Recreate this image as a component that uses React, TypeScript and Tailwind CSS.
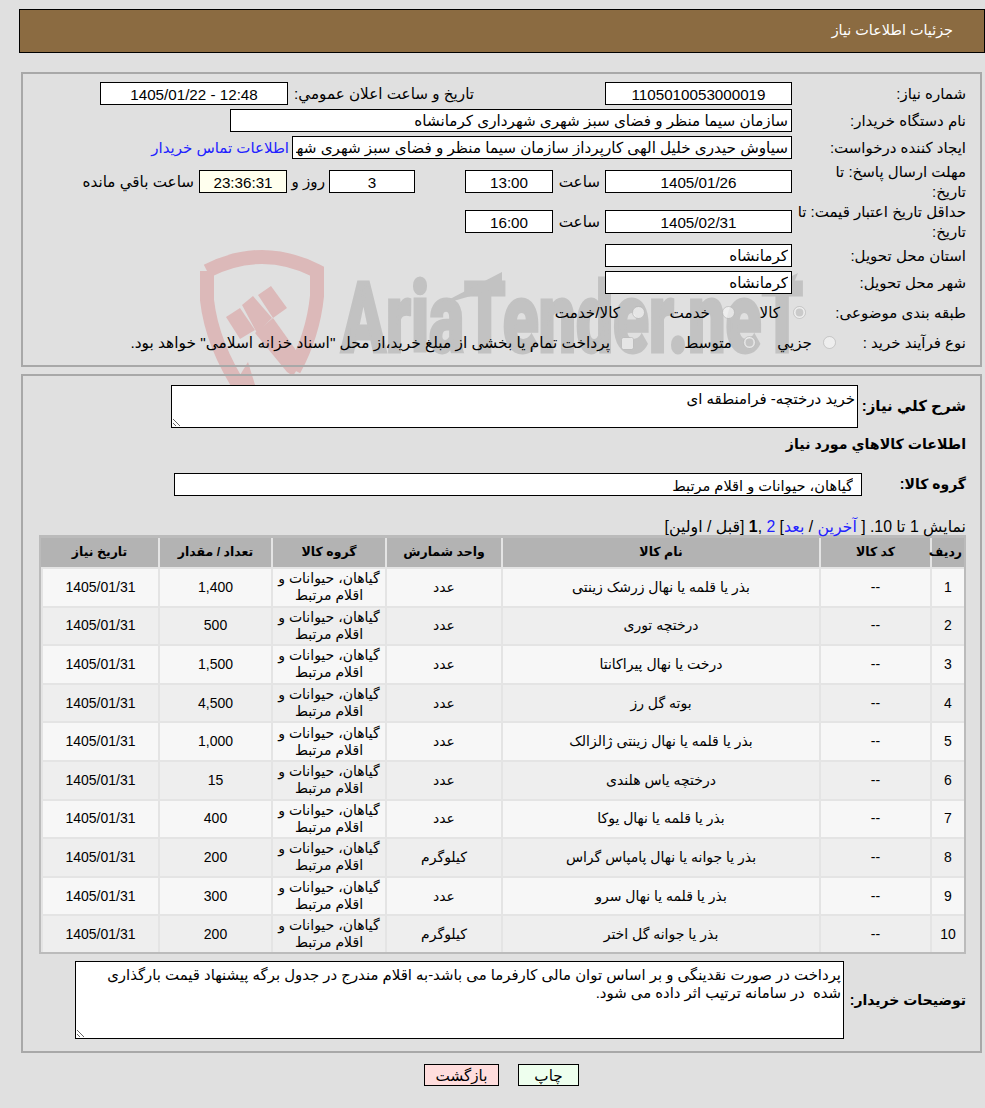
const font = "[font-family:'Liberation_Sans','DejaVu_Sans',sans-serif]";
const box = "h-[23px] shrink-0 border border-black px-[3px] pt-[1px] text-[15.2px] text-black outline-none";
const field = `${box} bg-white`;

const items = [
  ["1", "بذر یا قلمه یا نهال زرشک زینتی", "عدد", "1,400"],
  ["2", "درختچه توری", "عدد", "500"],
  ["3", "درخت یا نهال پیراکانتا", "عدد", "1,500"],
  ["4", "بوته گل رز", "عدد", "4,500"],
  ["5", "بذر یا قلمه یا نهال زینتی ژالزالک", "عدد", "1,000"],
  ["6", "درختچه یاس هلندی", "عدد", "15"],
  ["7", "بذر یا قلمه یا نهال یوکا", "عدد", "400"],
  ["8", "بذر یا جوانه یا نهال پامپاس گراس", "کیلوگرم", "200"],
  ["9", "بذر یا قلمه یا نهال سرو", "عدد", "300"],
  ["10", "بذر یا جوانه گل اختر", "کیلوگرم", "200"],
];

function Watermark() {
  return (
    <svg className="absolute left-0 top-0 pointer-events-none [direction:ltr]" width="985" height="400" viewBox="0 0 985 400">
      <g fill="#dcb9b9">
        <path d="M207,271 Q262,243 317,271 L317,296 Q313,335 294,370" fill="none" stroke="#dcb9b9" strokeWidth="14" />
        <path d="M207,271 L207,300 Q212,345 243,392" fill="none" stroke="#dcb9b9" strokeWidth="14" />
        <polygon points="226,317 240,308 255,330 240,339" />
        <polygon points="242,305 253,296 272,318 257,333" />
        <polygon points="258,295 271,286 287,308 273,318" />
        <polygon points="273,318 303,360 293,376 287,372 255,333" />
        <polygon points="248,362 256,388 232,388" />
      </g>
      <text x="341" y="352" fontSize="98" fontWeight="900" fill="#c2c2c2" stroke="#c2c2c2" strokeWidth="3" textLength="462" lengthAdjust="spacingAndGlyphs" style={{ fontFamily: "Roboto, sans-serif" }}>
        AriaTender.neT
      </text>
      <polygon points="448,300 502,272 502,287 450,302" fill="#c2c2c2" />
      <polygon points="763,290 798,273 793,285 765,294" fill="#c2c2c2" />
    </svg>
  );
}

function Row({ h, label, children }: { h: string; label: React.ReactNode; children?: React.ReactNode }) {
  return (
    <div className={`flex items-center ${h}`}>
      <div className="w-[174px] shrink-0 pt-[1px] text-[15px] leading-[20px]">{label}</div>
      {children}
    </div>
  );
}

function DateAndTime({ date, time }: { date: string; time: string }) {
  return (
    <>
      <input readOnly value={date} className={`${field} w-[187px] text-center`} />
      <div className="w-[52px] shrink-0 pr-[5px] pt-[1px] text-[15.2px]">ساعت</div>
      <input readOnly value={time} className={`${field} w-[88px] text-center`} />
    </>
  );
}

function Radio({ w, gap, checked, label }: { w: string; gap: string; checked?: boolean; label: string }) {
  return (
    <label className={`flex items-center ${w} ${gap} shrink-0 text-[15.2px]`}>
      <input type="radio" disabled checked={!!checked} readOnly className="m-0 size-[13px] shrink-0" />
      <span>{label}</span>
    </label>
  );
}

export default function App() {
  const cell = "border-l-2 border-[#e4e4e4] px-[2px] text-center align-middle";
  return (
    <div dir="rtl" className={`${font} relative h-[1108px] overflow-hidden bg-[#e0e0e0] pt-[9px] text-black`}>
      <Watermark />

      <div className="relative ml-[19px] flex h-[44px] items-center border border-black bg-[#8b6b41] pr-[31px] text-[14.4px] text-white">
        جزئیات اطلاعات نیاز
      </div>

      <section className="relative ml-[21px] mr-[3px] mt-[19px] h-[295px] border-2 border-[#a8a8a8] pr-[14px] pt-[6px]">
        <Row h="h-[27px]" label="شماره نیاز:">
          <input readOnly value="1105010053000019" className={`${field} w-[187px] text-center`} />
          <div className="mr-[131px] w-[186px] shrink-0 pt-[1px] text-[15.2px]">تاریخ و ساعت اعلان عمومي:</div>
          <input readOnly value="1405/01/22 - 12:48" dir="ltr" className={`${field} w-[188px] text-center`} />
        </Row>
        <Row h="h-[27px]" label="نام دستگاه خریدار:">
          <input readOnly value="سازمان سیما منظر و فضای سبز شهری شهرداری کرمانشاه" className={`${field} w-[562px]`} />
        </Row>
        <Row h="h-[27px]" label="ایجاد کننده درخواست:">
          <input readOnly value="سیاوش حیدری خلیل الهی کارپرداز سازمان سیما منظر و فضای سبز شهری شهرداری کرمانشاه" className={`${field} w-[500px]`} />
          <a className="mr-[3px] pt-[1px] text-[15px] text-[#2222ff]">اطلاعات تماس خریدار</a>
        </Row>
        <Row h="h-[41px]" label={<>مهلت ارسال پاسخ: تا<br />تاریخ:</>}>
          <DateAndTime date="1405/01/26" time="13:00" />
          <input readOnly value="3" className={`${field} mr-[50px] w-[86px] text-center`} />
          <div className="w-[42px] shrink-0 pr-[4px] pt-[1px] text-[15.2px]">روز و</div>
          <input readOnly value="23:36:31" className={`${box} w-[88px] bg-[#ffffee] text-center`} />
          <div className="mr-[5px] pt-[1px] text-[15.2px]">ساعت باقي مانده</div>
        </Row>
        <Row h="h-[39px]" label={<>حداقل تاریخ اعتبار قیمت: تا<br />تاریخ:</>}>
          <DateAndTime date="1405/02/31" time="16:00" />
        </Row>
        <Row h="mt-[1px] h-[27px]" label="استان محل تحویل:">
          <input readOnly value="کرمانشاه" className={`${field} w-[187px]`} />
        </Row>
        <Row h="h-[27px]" label="شهر محل تحویل:">
          <input readOnly value="کرمانشاه" className={`${field} w-[187px]`} />
        </Row>
        <div className="flex h-[34px] items-center">
          <div className="w-[160px] shrink-0 text-[15px]">طبقه بندی موضوعی:</div>
          <Radio w="w-[71px]" gap="gap-[13px]" checked label="کالا" />
          <Radio w="w-[90px]" gap="gap-[12px]" label="خدمت" />
          <Radio w="w-auto" gap="gap-[12px]" label="کالا/خدمت" />
        </div>
        <div className="flex h-[26px] items-center">
          <div className="w-[130px] shrink-0 text-[15px]">نوع فرآیند خرید :</div>
          <Radio w="w-[80px]" gap="gap-[11px]" label="جزيي" />
          <Radio w="w-[122px]" gap="gap-[11px]" checked label="متوسط" />
          <input type="checkbox" disabled className="m-0 size-[13px] shrink-0" />
          <span className="mr-[11px] text-[15.4px]">پرداخت تمام یا بخشی از مبلغ خرید،از محل "اسناد خزانه اسلامی" خواهد بود.</span>
        </div>
      </section>

      <section className="relative ml-[21px] mr-[3px] mt-[7px] h-[679px] border-2 border-[#a8a8a8] pr-[14px] pt-[9px]">
        <div className="flex h-[43px] items-center">
          <div className="w-[108px] shrink-0 text-[15px] font-bold">شرح كلي نياز:</div>
          <textarea readOnly value="خرید درختچه- فرامنطقه ای" className="h-[43px] w-[687px] border border-black bg-white px-[2px] pt-[2px] text-[15px] text-black outline-none" />
        </div>
        <div className="flex h-[30px] items-center pt-[3px] text-[14.2px] font-bold">اطلاعات كالاهاي مورد نياز</div>
        <div className="mt-[15px] flex h-[23px] items-center">
          <div className="w-[104px] shrink-0 text-[14px] font-bold">گروه کالا:</div>
          <input readOnly value="گیاهان، حیوانات و اقلام مرتبط" className="h-[23px] w-[688px] shrink-0 border border-black bg-white pl-[3px] pr-[8px] pt-[1px] text-[14.6px] text-black outline-none" />
        </div>
        <div className="mt-[22px] h-[17px] text-[15.8px] leading-[18px]">
          نمایش 1 تا 10. [ <a className="text-[#2222ff]">آخرین</a> / <a className="text-[#2222ff]">بعد</a>] <a className="text-[#2222ff]">2</a> ,<b>1</b> [قبل / اولین]
        </div>
        <div className="w-[927px] border-2 border-t-[3px] border-[#bbbbbb]">
          <table className="w-[923px] table-fixed border-separate border-spacing-0 text-[14px] leading-[17px]">
            <colgroup>
              <col className="w-[34px]" />
              <col className="w-[111px]" />
              <col className="w-[318px]" />
              <col className="w-[116px]" />
              <col className="w-[114px]" />
              <col className="w-[113px]" />
              <col className="w-[117px]" />
            </colgroup>
            <thead>
              <tr className="h-[31px] bg-[#b3b3b3]">
                {["ردیف", "کد کالا", "نام کالا", "واحد شمارش", "گروه کالا", "تعداد / مقدار", "تاریخ نیاز"].map((t) => (
                  <th key={t} className={`${cell} border-b-2 text-[12.5px] font-bold last:border-l-0`}>{t}</th>
                ))}
              </tr>
            </thead>
            <tbody>
              {items.map((r, i) => {
                const last = i === items.length - 1;
                const row = last ? cell : `${cell} border-b-2`;
                return (
                  <tr key={r[0]} className={`${last ? "h-[36px]" : "h-[38.6px]"} ${i % 2 === 0 ? "bg-[#f7f7f7]" : "bg-[#eeeeee]"}`}>
                    <td className={row}>{r[0]}</td>
                    <td className={row}>--</td>
                    <td className={row}>{r[1]}</td>
                    <td className={row}>{r[2]}</td>
                    <td className={row}>گیاهان، حیوانات و اقلام مرتبط</td>
                    <td className={row}>{r[3]}</td>
                    <td className={`${row} border-l-0`}>1405/01/31</td>
                  </tr>
                );
              })}
            </tbody>
          </table>
        </div>
        <div className="mt-[7px] flex h-[78px] items-center">
          <div className="w-[122px] shrink-0 whitespace-nowrap text-[14px] font-bold">توضیحات خریدار:</div>
          <textarea
            readOnly
            value="پرداخت در صورت نقدینگی و بر اساس توان مالی کارفرما می باشد-به اقلام مندرج در جدول برگه پیشنهاد قیمت بارگذاری شده  در سامانه ترتیب اثر داده می شود."
            className="h-[78px] w-[769px] border border-black bg-white px-[2px] pt-[4px] text-[14.9px] leading-[18px] text-black outline-none"
          />
        </div>
      </section>

      <div className="relative mt-[11px] flex justify-center gap-[19px] pl-[18px]">
        <button className="h-[22px] w-[61px] border border-black bg-[#eeffee] text-[15.2px]">چاپ</button>
        <button className="h-[22px] w-[75px] border border-black bg-[#ffdddd] text-[15.2px]">بازگشت</button>
      </div>
    </div>
  );
}
